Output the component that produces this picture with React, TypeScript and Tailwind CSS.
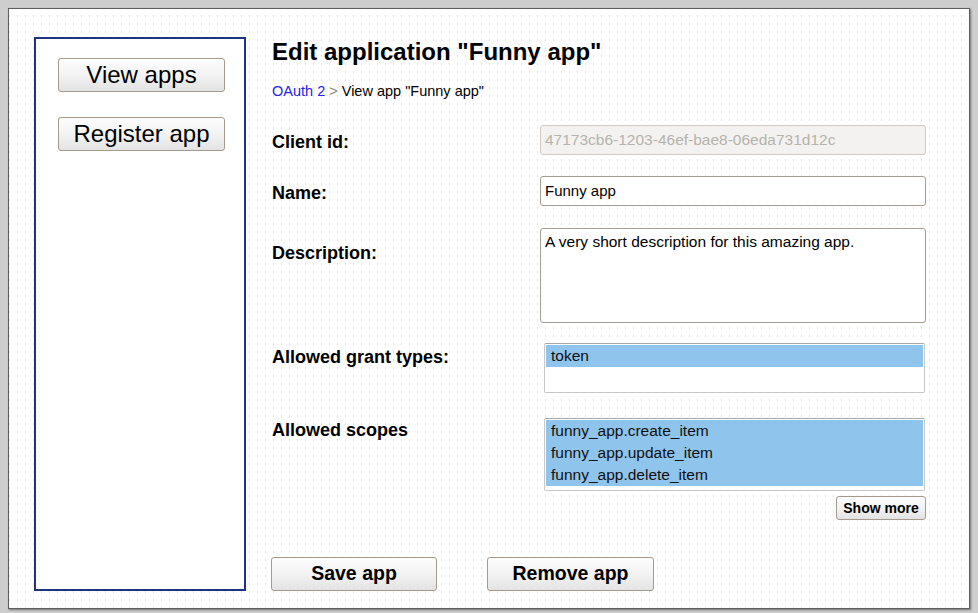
const btn =
  "border border-[#a69a8c] rounded-[3px] bg-gradient-to-b from-[#fdfdfd] via-[#f3f3f3] to-[#e3e3e3] text-black flex items-center justify-center";

function Row({
  label,
  labelPad,
  children,
  className = "",
}: {
  label: string;
  labelPad: string;
  children: React.ReactNode;
  className?: string;
}) {
  return (
    <div className={`flex ${className}`}>
      <div className={`w-[268px] shrink-0 text-[18px] leading-[21px] font-bold ${labelPad}`}>{label}</div>
      {children}
    </div>
  );
}

function ListBox({ items, height }: { items: string[]; height: string }) {
  return (
    <div
      className={`ml-[4px] w-[381px] ${height} border border-[#c8c8c8] border-t-[#a9a9a9] rounded-[2px] bg-white p-[1px]`}
    >
      {items.map((item) => (
        <div key={item} className="h-[22px] bg-[#8fc4ec] pl-[5px] text-[15.5px] leading-[22px] text-[#111]">
          {item}
        </div>
      ))}
    </div>
  );
}

export default function App() {
  return (
    <div className="w-[978px] h-[613px] bg-[#cecece] pt-2 pl-2 font-['Liberation_Sans',Arial,sans-serif] text-black">
      <div className="w-[962px] h-[601px] border border-[#5e5e5e] shadow-[1px_1px_2px_rgba(0,0,0,0.45)] bg-white bg-[linear-gradient(to_bottom,transparent_2px,#fff_2px),linear-gradient(to_right,#e1e1e1_1px,#fff_1px)] bg-[length:8px_8px] bg-[position:0_6px] flex items-start pl-[25px] pt-[28px]">
        <aside className="w-[212px] h-[554px] shrink-0 border-2 border-[#1e3382] bg-white flex flex-col items-start gap-[25px] pl-[22px] pt-[19px]">
          <button className={`${btn} w-[167px] h-[34px] text-[24px]`}>View apps</button>
          <button className={`${btn} w-[167px] h-[34px] text-[24px]`}>Register app</button>
        </aside>

        <main className="ml-[26px] w-[654px] shrink-0">
          <h1 className="mt-[1px] text-[24px] leading-[28px] font-bold">Edit application "Funny app"</h1>
          <div className="mt-[17px] text-[14.5px] leading-[16px]">
            <span className="text-[#2323f0]">OAuth 2</span>
            <span className="text-[#8a8a8a]"> &gt; </span>
            <span>View app "Funny app"</span>
          </div>

          <Row label="Client id:" labelPad="pt-[7px]" className="mt-[26px]">
            <div className="w-[386px] h-[30px] border border-[#cfcac3] rounded-[3px] bg-[#f3f2f0] pl-[4px] flex items-center text-[15.5px] text-[#b6b2ac]">
              47173cb6-1203-46ef-bae8-06eda731d12c
            </div>
          </Row>

          <Row label="Name:" labelPad="pt-[7px]" className="mt-[21px]">
            <div className="w-[386px] h-[30px] border border-[#a59d92] rounded-[3px] bg-white pl-[4px] flex items-center text-[15px]">
              Funny app
            </div>
          </Row>

          <Row label="Description:" labelPad="pt-[15px]" className="mt-[22px]">
            <div className="w-[386px] h-[95px] border border-[#a59d92] rounded-[3px] bg-white pl-[4px] pt-[4px] text-[15.5px] leading-[17px]">
              A very short description for this amazing app.
            </div>
          </Row>

          <Row label="Allowed grant types:" labelPad="pt-[4px]" className="mt-[20px]">
            <ListBox items={["token"]} height="h-[50px]" />
          </Row>

          <Row label="Allowed scopes" labelPad="pt-[2px]" className="mt-[25px]">
            <ListBox
              items={["funny_app.create_item", "funny_app.update_item", "funny_app.delete_item"]}
              height="h-[73px]"
            />
          </Row>

          <div className="mt-[5px] flex justify-end">
            <button className={`${btn} w-[90px] h-[24px] text-[14px] font-bold`}>Show more</button>
          </div>

          <div className="mt-[37px] flex gap-[50px] -ml-[1px]">
            <button className={`${btn} w-[166px] h-[34px] text-[19.5px] font-bold`}>Save app</button>
            <button className={`${btn} w-[167px] h-[34px] text-[19.5px] font-bold`}>Remove app</button>
          </div>
        </main>
      </div>
    </div>
  );
}
